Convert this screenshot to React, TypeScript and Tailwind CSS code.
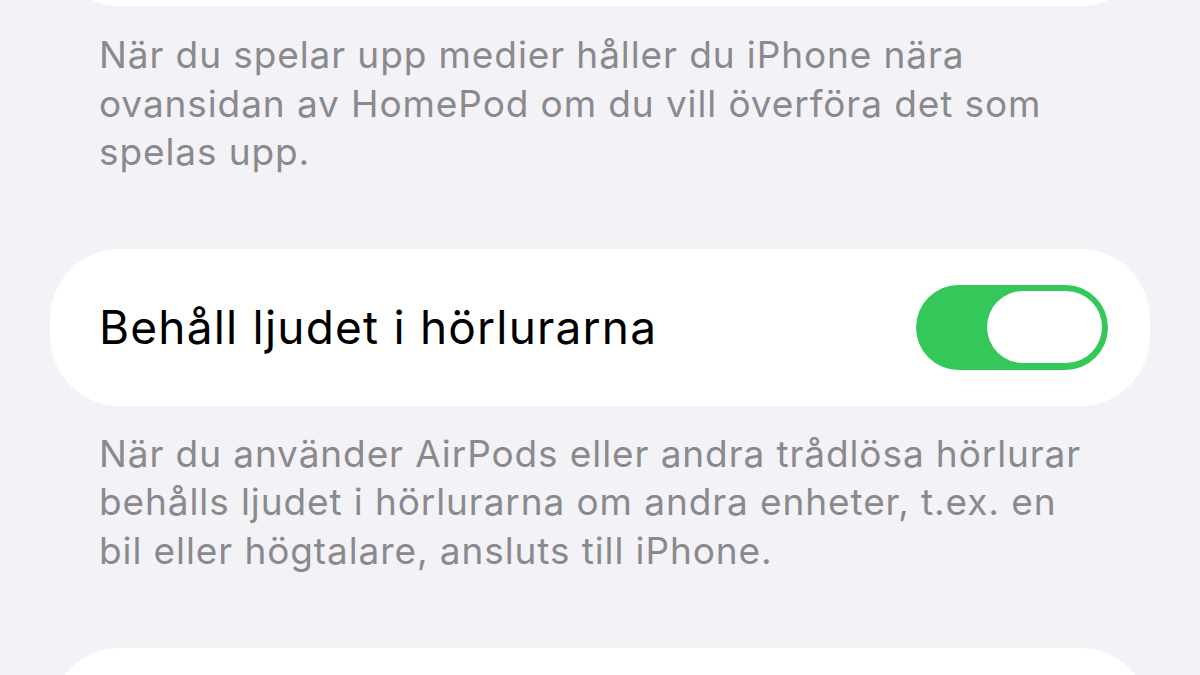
export default function App() {
  return (
    <div
      className="w-[1200px] h-[675px] overflow-hidden bg-[#f2f2f7] px-[50px]"
      style={{ fontFamily: "Inter, 'Noto Sans', sans-serif" }}
    >
      {/* previous group, scrolled mostly out of view */}
      <div className="-mt-[150px] h-[156px] rounded-[70px] bg-white" />

      <p className="mt-[25px] px-[49px] text-[37px] leading-[48.5px] tracking-[0.9px] text-[#8a8a8e]">
        När du spelar upp medier håller du iPhone nära
        <br />
        ovansidan av HomePod om du vill överföra det som
        <br />
        spelas upp.
      </p>

      <div className="mt-[72px] flex h-[157px] items-center justify-between rounded-[70px] bg-white pl-[49px] pr-[42px]">
        <span className="text-[46px] tracking-[1.2px] text-black">Behåll ljudet i hörlurarna</span>
        <div className="relative h-[85px] w-[192px] rounded-full bg-[#34c759]">
          <div className="absolute right-[6px] top-[6.5px] h-[72px] w-[115px] rounded-full bg-white" />
        </div>
      </div>

      <p className="mt-[24px] px-[49px] text-[37px] leading-[48.5px] tracking-[0.9px] text-[#8a8a8e]">
        När du använder AirPods eller andra trådlösa hörlurar
        <br />
        behålls ljudet i hörlurarna om andra enheter, t.ex. en
        <br />
        bil eller högtalare, ansluts till iPhone.
      </p>

      <div className="mt-[73px] h-[160px] rounded-[70px] bg-white" />
    </div>
  );
}
